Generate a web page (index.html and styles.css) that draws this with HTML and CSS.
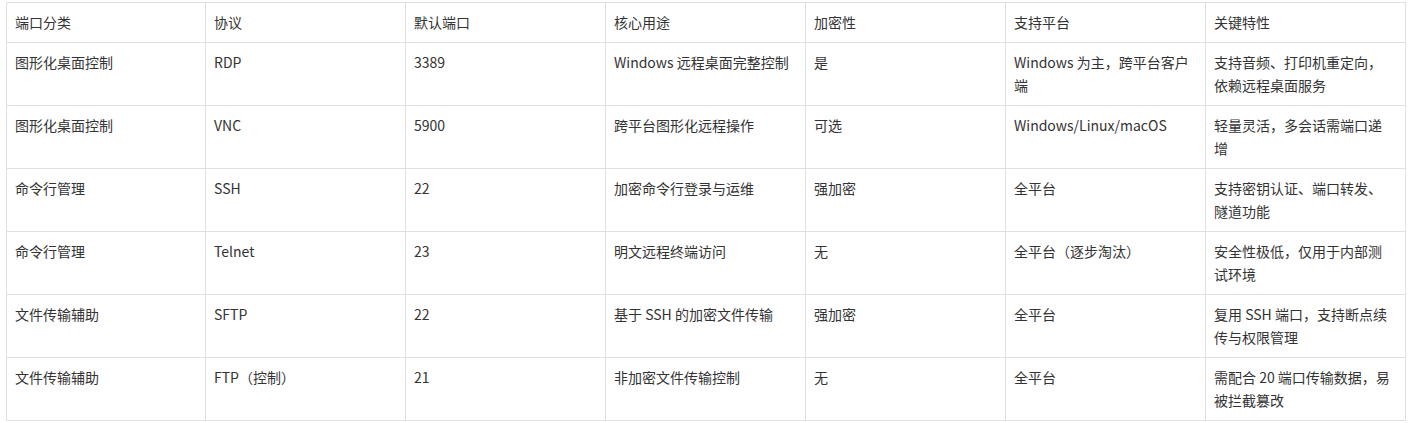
FILE: index.html
```html
<!DOCTYPE html>
<html lang="zh-CN">
<head>
<meta charset="utf-8">
<title>端口分类</title>
<link rel="stylesheet" href="styles.css">
</head>
<body>
<div class="wrap">
<table class="ports">
<colgroup>
<col class="c1"><col class="c"><col class="c"><col class="c"><col class="c"><col class="c"><col class="c">
</colgroup>
<thead>
<tr><th>端口分类</th><th>协议</th><th>默认端口</th><th>核心用途</th><th>加密性</th><th>支持平台</th><th>关键特性</th></tr>
</thead>
<tbody>
<tr><td>图形化桌面控制</td><td>RDP</td><td>3389</td><td>Windows 远程桌面完整控制</td><td>是</td><td>Windows 为主，跨平台客户端</td><td>支持音频、打印机重定向，依赖远程桌面服务</td></tr>
<tr><td>图形化桌面控制</td><td>VNC</td><td>5900</td><td>跨平台图形化远程操作</td><td>可选</td><td>Windows/Linux/macOS</td><td>轻量灵活，多会话需端口递增</td></tr>
<tr><td>命令行管理</td><td>SSH</td><td>22</td><td>加密命令行登录与运维</td><td>强加密</td><td>全平台</td><td>支持密钥认证、端口转发、隧道功能</td></tr>
<tr><td>命令行管理</td><td>Telnet</td><td>23</td><td>明文远程终端访问</td><td>无</td><td>全平台（逐步淘汰）</td><td>安全性极低，仅用于内部测试环境</td></tr>
<tr><td>文件传输辅助</td><td>SFTP</td><td>22</td><td>基于 SSH 的加密文件传输</td><td>强加密</td><td>全平台</td><td>复用 SSH 端口，支持断点续传与权限管理</td></tr>
<tr><td>文件传输辅助</td><td>FTP（控制）</td><td>21</td><td>非加密文件传输控制</td><td>无</td><td>全平台</td><td>需配合 20 端口传输数据，易被拦截篡改</td></tr>
</tbody>
</table>
</div>
</body>
</html>
```

FILE: styles.css
```css
html, body {
  margin: 0;
  padding: 0;
  background: #ffffff;
}
.wrap {
  padding: 2px 0 0 6px;
}
.ports {
  border-collapse: collapse;
  table-layout: fixed;
  width: 1400px;
  font-family: "Noto Sans CJK SC", "Noto Sans", sans-serif;
  font-size: 14px;
  line-height: 23px;
  color: #333333;
}
.ports .c1 { width: 199px; }
.ports .c { width: 200px; }
.ports th, .ports td {
  border: 1px solid #e0e0e0;
  padding: 8px 12px 8px 8px;
  text-align: left;
  vertical-align: top;
  font-weight: normal;
}
```
